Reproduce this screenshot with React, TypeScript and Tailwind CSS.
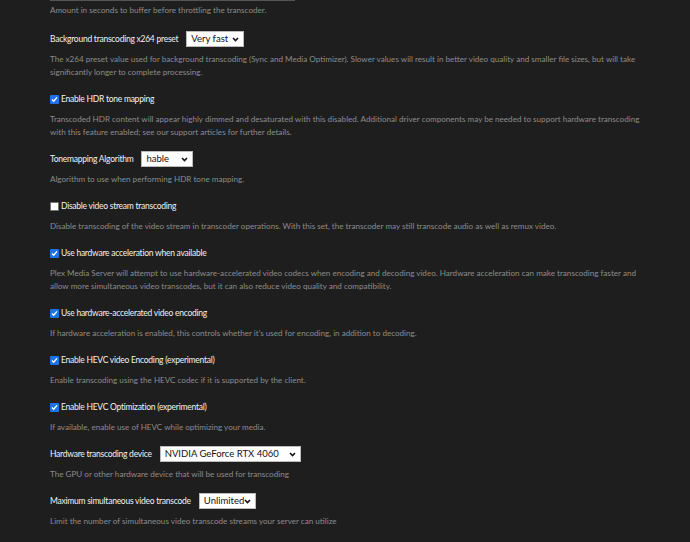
import React from "react";

type Item = {
  label: string;
  check?: boolean;
  select?: { value: string; w: string };
  desc: string[];
};

const items: Item[] = [
  {
    label: "Background transcoding x264 preset",
    select: { value: "Very fast", w: "w-[58px]" },
    desc: [
      "The x264 preset value used for background transcoding (Sync and Media Optimizer). Slower values will result in better video quality and smaller file sizes, but will take",
      "significantly longer to complete processing.",
    ],
  },
  {
    label: "Enable HDR tone mapping",
    check: true,
    desc: [
      "Transcoded HDR content will appear highly dimmed and desaturated with this disabled. Additional driver components may be needed to support hardware transcoding",
      "with this feature enabled; see our support articles for further details.",
    ],
  },
  {
    label: "Tonemapping Algorithm",
    select: { value: "hable", w: "w-[52px]" },
    desc: ["Algorithm to use when performing HDR tone mapping."],
  },
  {
    label: "Disable video stream transcoding",
    check: false,
    desc: [
      "Disable transcoding of the video stream in transcoder operations. With this set, the transcoder may still transcode audio as well as remux video.",
    ],
  },
  {
    label: "Use hardware acceleration when available",
    check: true,
    desc: [
      "Plex Media Server will attempt to use hardware-accelerated video codecs when encoding and decoding video. Hardware acceleration can make transcoding faster and",
      "allow more simultaneous video transcodes, but it can also reduce video quality and compatibility.",
    ],
  },
  {
    label: "Use hardware-accelerated video encoding",
    check: true,
    desc: [
      "If hardware acceleration is enabled, this controls whether it's used for encoding, in addition to decoding.",
    ],
  },
  {
    label: "Enable HEVC video Encoding (experimental)",
    check: true,
    desc: ["Enable transcoding using the HEVC codec if it is supported by the client."],
  },
  {
    label: "Enable HEVC Optimization (experimental)",
    check: true,
    desc: ["If available, enable use of HEVC while optimizing your media."],
  },
  {
    label: "Hardware transcoding device",
    select: { value: "NVIDIA GeForce RTX 4060", w: "w-[141px]" },
    desc: ["The GPU or other hardware device that will be used for transcoding"],
  },
  {
    label: "Maximum simultaneous video transcode",
    select: { value: "Unlimited", w: "w-[57px]" },
    desc: ["Limit the number of simultaneous video transcode streams your server can utilize"],
  },
];

const Chevron = () => (
  <svg width="7" height="5" viewBox="0 0 7 5" className="shrink-0">
    <path d="M1 1l2.5 2.5L6 1" fill="none" stroke="#111" strokeWidth="1.6" />
  </svg>
);

const Checkbox = ({ checked }: { checked: boolean }) =>
  checked ? (
    <span className="shrink-0 w-[9px] h-[9px] rounded-[1px] bg-[#1a73e8] flex items-center justify-center">
      <svg width="7" height="7" viewBox="0 0 7 7">
        <path d="M1 3.6l1.7 1.7L6 1.4" fill="none" stroke="#fff" strokeWidth="1.4" />
      </svg>
    </span>
  ) : (
    <span className="shrink-0 block w-[9px] h-[9px] rounded-[1px] bg-white border border-[#767676]" />
  );

const Desc = ({ lines }: { lines: string[] }) => (
  <div className="mt-[5px] text-[8.1px] leading-[13px] text-[#8c8c8c] whitespace-nowrap">
    {lines.map((l, i) => (
      <div key={i}>{l}</div>
    ))}
  </div>
);

const App = () => {
  return (
    <main className="w-[690px] h-[542px] overflow-hidden bg-[#1e1e1e] pl-[50px] font-['Lato',sans-serif]">
      {/* tail of the buffer input above */}
      <div className="w-[245px] h-px bg-[#555]" />
      <div className="mt-[3px] mb-[13px] text-[8.1px] leading-[13px] text-[#8c8c8c] whitespace-nowrap">
        Amount in seconds to buffer before throttling the transcoder.
      </div>

      {items.map((it) => (
        <section key={it.label} className="mb-[11px]">
          <div className="h-[18px] flex items-center text-[8.5px] tracking-[-0.25px] text-[#f2f2f2] whitespace-nowrap">
            {it.check !== undefined && (
              <span className="mr-[2px] flex">
                <Checkbox checked={it.check} />
              </span>
            )}
            <span>{it.label}</span>
            {it.select && (
              <div
                className={`ml-[8px] shrink-0 ${it.select.w} h-[16px] bg-white border border-[#bbb] flex items-center justify-between pl-[4px] pr-[4px] text-[9.5px] tracking-normal text-[#111]`}
              >
                <span className="leading-none">{it.select.value}</span>
                <Chevron />
              </div>
            )}
          </div>
          <Desc lines={it.desc} />
        </section>
      ))}
    </main>
  );
};

export default App;
